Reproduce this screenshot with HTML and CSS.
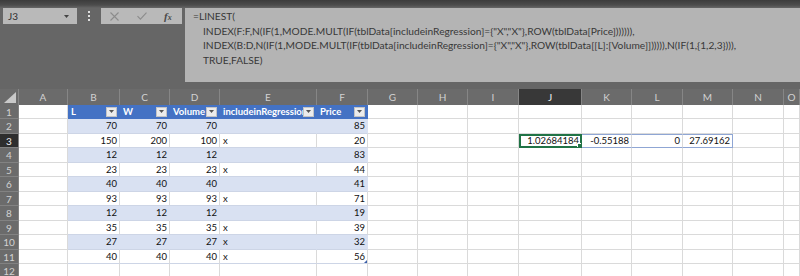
FILE: index.html
```html
<!DOCTYPE html>
<html>
<head>
<meta charset="utf-8">
<title>LINEST</title>
<link rel="stylesheet" href="styles.css">
</head>
<body>
<div class="app">
  <div class="bar">
    <div class="namebox"><span>J3</span><svg width="5" height="3" viewBox="0 0 5 3"><path d="M0 0h5L2.5 3z" fill="#444"/></svg></div>
    <div class="grip"></div>
    <div class="fbtns">
      <svg class="ico-x" width="9" height="9" viewBox="0 0 9 9"><path d="M0.5 0.5L8.5 8.5M8.5 0.5L0.5 8.5" stroke="#8c8c8c" stroke-width="1.1" fill="none"/></svg>
      <svg class="ico-ok" width="10" height="8" viewBox="0 0 10 8"><path d="M0.5 4.2L3.4 7.2L9.5 0.6" stroke="#8c8c8c" stroke-width="1.1" fill="none"/></svg>
      <span class="fx"><i>f</i><i class="x">x</i></span>
    </div>
    <div class="formula">
      <div>=LINEST(</div>
      <div class="ind">INDEX(F:F,N(IF(1,MODE.MULT(IF(tblData[includeinRegression]={"X","X"},ROW(tblData[Price])))))),</div>
      <div class="ind">INDEX(B:D,N(IF(1,MODE.MULT(IF(tblData[includeinRegression]={"X","X"},ROW(tblData[[L]:[Volume]]))))),N(IF(1,{1,2,3}))),</div>
      <div class="ind">TRUE,FALSE)</div>
    </div>
  </div>
  <div class="sheet">
    <div class="h corner"><svg width="12" height="11" viewBox="0 0 12 11"><path d="M12 0V11H0z" fill="#c9c9c9"/></svg></div>
    <div class="h">A</div><div class="h">B</div><div class="h">C</div><div class="h">D</div><div class="h">E</div><div class="h">F</div><div class="h">G</div><div class="h">H</div><div class="h">I</div><div class="h act">J</div><div class="h">K</div><div class="h">L</div><div class="h">M</div><div class="h">N</div><div class="h">O</div>

    <div class="r">1</div><div class="c"></div>
    <div class="t th"><span>L</span><b class="fb"><svg width="5" height="3" viewBox="0 0 5 3"><path d="M0 0h5L2.5 3z" fill="#555"/></svg></b></div>
    <div class="t th"><span>W</span><b class="fb"><svg width="5" height="3" viewBox="0 0 5 3"><path d="M0 0h5L2.5 3z" fill="#555"/></svg></b></div>
    <div class="t th"><span>Volume</span><b class="fb"><svg width="5" height="3" viewBox="0 0 5 3"><path d="M0 0h5L2.5 3z" fill="#555"/></svg></b></div>
    <div class="t th"><span>includeinRegression</span><b class="fb"><svg width="5" height="3" viewBox="0 0 5 3"><path d="M0 0h5L2.5 3z" fill="#555"/></svg></b></div>
    <div class="t th"><span>Price</span><b class="fb"><svg width="5" height="3" viewBox="0 0 5 3"><path d="M0 0h5L2.5 3z" fill="#555"/></svg></b></div>
    <div class="c"></div><div class="c"></div><div class="c"></div><div class="c"></div><div class="c"></div><div class="c"></div><div class="c"></div><div class="c"></div><div class="c"></div>

    <div class="r">2</div><div class="c"></div>
    <div class="t b n">70</div><div class="t b n">70</div><div class="t b n">70</div><div class="t b"></div><div class="t b n">85</div>
    <div class="c"></div><div class="c"></div><div class="c"></div><div class="c"></div><div class="c"></div><div class="c"></div><div class="c"></div><div class="c"></div><div class="c"></div>

    <div class="r act">3</div><div class="c"></div>
    <div class="t n">150</div><div class="t n">200</div><div class="t n">100</div><div class="t">x</div><div class="t n">20</div>
    <div class="c"></div><div class="c"></div><div class="c"></div>
    <div class="c n sel">1.02684184</div><div class="c n sp">-0.55188</div><div class="c n sp">0</div><div class="c n sp spr">27.69162</div>
    <div class="c"></div><div class="c"></div>

    <div class="r">4</div><div class="c"></div>
    <div class="t b n">12</div><div class="t b n">12</div><div class="t b n">12</div><div class="t b"></div><div class="t b n">83</div>
    <div class="c"></div><div class="c"></div><div class="c"></div><div class="c"></div><div class="c"></div><div class="c"></div><div class="c"></div><div class="c"></div><div class="c"></div>

    <div class="r">5</div><div class="c"></div>
    <div class="t n">23</div><div class="t n">23</div><div class="t n">23</div><div class="t">x</div><div class="t n">44</div>
    <div class="c"></div><div class="c"></div><div class="c"></div><div class="c"></div><div class="c"></div><div class="c"></div><div class="c"></div><div class="c"></div><div class="c"></div>

    <div class="r">6</div><div class="c"></div>
    <div class="t b n">40</div><div class="t b n">40</div><div class="t b n">40</div><div class="t b"></div><div class="t b n">41</div>
    <div class="c"></div><div class="c"></div><div class="c"></div><div class="c"></div><div class="c"></div><div class="c"></div><div class="c"></div><div class="c"></div><div class="c"></div>

    <div class="r">7</div><div class="c"></div>
    <div class="t n">93</div><div class="t n">93</div><div class="t n">93</div><div class="t">x</div><div class="t n">71</div>
    <div class="c"></div><div class="c"></div><div class="c"></div><div class="c"></div><div class="c"></div><div class="c"></div><div class="c"></div><div class="c"></div><div class="c"></div>

    <div class="r">8</div><div class="c"></div>
    <div class="t b n">12</div><div class="t b n">12</div><div class="t b n">12</div><div class="t b"></div><div class="t b n">19</div>
    <div class="c"></div><div class="c"></div><div class="c"></div><div class="c"></div><div class="c"></div><div class="c"></div><div class="c"></div><div class="c"></div><div class="c"></div>

    <div class="r">9</div><div class="c"></div>
    <div class="t n">35</div><div class="t n">35</div><div class="t n">35</div><div class="t">x</div><div class="t n">39</div>
    <div class="c"></div><div class="c"></div><div class="c"></div><div class="c"></div><div class="c"></div><div class="c"></div><div class="c"></div><div class="c"></div><div class="c"></div>

    <div class="r">10</div><div class="c"></div>
    <div class="t b n">27</div><div class="t b n">27</div><div class="t b n">27</div><div class="t b">x</div><div class="t b n">32</div>
    <div class="c"></div><div class="c"></div><div class="c"></div><div class="c"></div><div class="c"></div><div class="c"></div><div class="c"></div><div class="c"></div><div class="c"></div>

    <div class="r">11</div><div class="c"></div>
    <div class="t n">40</div><div class="t n">40</div><div class="t n">40</div><div class="t">x</div><div class="t n last">56</div>
    <div class="c"></div><div class="c"></div><div class="c"></div><div class="c"></div><div class="c"></div><div class="c"></div><div class="c"></div><div class="c"></div><div class="c"></div>

    <div class="r">12</div><div class="c"></div>
    <div class="c"></div><div class="c"></div><div class="c"></div><div class="c"></div><div class="c"></div>
    <div class="c"></div><div class="c"></div><div class="c"></div><div class="c"></div><div class="c"></div><div class="c"></div><div class="c"></div><div class="c"></div><div class="c"></div>
  </div>
</div>
</body>
</html>
```

FILE: styles.css
```css
* { box-sizing: border-box; margin: 0; padding: 0; }
html, body { width: 800px; height: 276px; overflow: hidden; background: #fff; }
body { font-family: Lato, "Liberation Sans", sans-serif; }

.bar {
  display: flex;
  align-items: flex-start;
  height: 89px;
  padding-top: 8px;
  background: linear-gradient(#3c3c3c 0, #4c4c4c 5px, #666 8px, #666 100%);
}
.namebox {
  margin-left: 3px;
  width: 74px;
  height: 16px;
  background: #b9b9b9;
  display: flex;
  align-items: center;
  justify-content: space-between;
  padding: 0 8px 0 5px;
  font-size: 10px;
  color: #2e2e2e;
}
.grip {
  margin-left: 11px;
  margin-top: 3px;
  width: 2px;
  height: 10px;
  border-left: 2px dotted #dedede;
}
.fbtns {
  margin-left: 11px;
  width: 81px;
  height: 16px;
  background: #b9b9b9;
  display: flex;
  align-items: center;
  padding-left: 9px;
}
.ico-ok { margin-left: 18px; }
.fx {
  margin-left: 17px;
  font-family: "Liberation Serif", serif;
  font-size: 11px;
  color: #4a4a4a;
  font-weight: bold;
}
.fx .x { font-size: 8px; }
.formula {
  margin-left: 3px;
  flex: 1;
  height: 74px;
  background: #b4b4b4;
  padding: 1px 0 0 8px;
  font-size: 10.2px;
  line-height: 14.5px;
  color: #383838;
  white-space: nowrap;
  overflow: hidden;
}
.ind { padding-left: 10px; }

.sheet {
  display: grid;
  grid-template-columns: 19px 49px 52px 50px 50px 97px 51px 50px 50px 51px 63px 50px 51px 50px 51px 1fr;
  grid-template-rows: 16px 14px 15px 14px 15px 14px 15px 14px 15px 14px 15px 14px 15px;
  font-size: 9.5px;
  color: #111;
}
.sheet > div {
  overflow: hidden;
  white-space: nowrap;
}
.h {
  background: #6b6b6b;
  color: #d2d2d2;
  text-align: center;
  line-height: 16px;
  font-size: 10px;
  border-right: 1px solid #868686;
}
.h.act { background: #383838; color: #f2f2f2; }
.corner {
  display: flex;
  align-items: flex-end;
  justify-content: flex-end;
  padding: 0 2px 2px 0;
}
.r {
  background: #6b6b6b;
  color: #d2d2d2;
  text-align: center;
  font-size: 10px;
  line-height: 14px;
  border-bottom: 1px solid #828282;
  border-right: 1px solid #828282;
}
.r.act { background: #2e2e2e; color: #f2f2f2; }
.c, .t {
  border-right: 1px solid #dadada;
  border-bottom: 1px solid #dadada;
  padding: 0 2px 0 3px;
  line-height: 14px;
}
.n { text-align: right; }
.t { border-bottom-color: #cdd5e6; }
.t.b { background: #d9e1f2; border-right-color: #d9e1f2; }
.th {
  background: #4472c4;
  color: #fff;
  font-weight: bold;
  display: flex;
  align-items: center;
  border-right-color: #4472c4;
  border-bottom-color: #4472c4;
  padding: 0 1px 0 3px;
}
.th span { flex: 1; overflow: hidden; }
.fb {
  flex: none;
  width: 11px;
  height: 10px;
  margin-right: 1px;
  background: #ececec;
  border: 1px solid #c4c4c4;
  display: flex;
  align-items: center;
  justify-content: center;
}
.sel {
  position: relative;
  outline: 2px solid #217346;
  outline-offset: -2px;
  z-index: 2;
}
.sel::after {
  content: "";
  position: absolute;
  right: -2px;
  bottom: -2px;
  width: 4px;
  height: 4px;
  background: #217346;
  border: 1px solid #fff;
}
.sp { border-top: 1px solid #8fa6d4; border-bottom-color: #8fa6d4; line-height: 12px; }
.spr { border-right-color: #8fa6d4; }
.last { position: relative; }
.last::after {
  content: "";
  position: absolute;
  right: 0;
  bottom: 0;
  border-left: 3px solid transparent;
  border-bottom: 3px solid #3b5fa8;
}
```
